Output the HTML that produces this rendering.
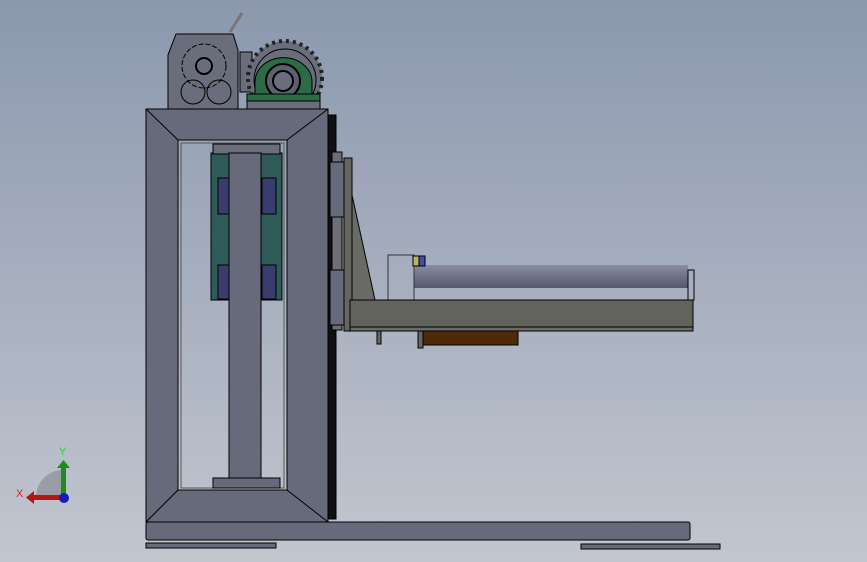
<!DOCTYPE html><html><head><style>html,body{margin:0;padding:0;overflow:hidden}body{width:867px;height:562px}</style></head><body>
<svg width="867" height="562" viewBox="0 0 867 562" xmlns="http://www.w3.org/2000/svg" font-family="Liberation Sans, sans-serif">
<defs>
<linearGradient id="bg" x1="0" y1="0" x2="0" y2="1"><stop offset="0" stop-color="#8b98ae"/><stop offset="1" stop-color="#c2c6cf"/></linearGradient>
<linearGradient id="rol" x1="0" y1="0" x2="0" y2="1"><stop offset="0" stop-color="#8a8ea3"/><stop offset="0.5" stop-color="#6f7285"/><stop offset="1" stop-color="#55586a"/></linearGradient>
</defs>
<rect width="867" height="562" fill="url(#bg)"/>
<g stroke="#000" stroke-width="1">
<line x1="230" y1="32" x2="242" y2="13" stroke="#777" stroke-width="3"/>
<path d="M176 34H233L238 50V109H168V55Z" fill="#6a6d7b"/>
<circle cx="204" cy="66" r="22" fill="#6a6d7b" stroke-dasharray="5 2"/><circle cx="204" cy="66" r="8" fill="#6a6d7b" stroke-width="2"/>
<circle cx="193" cy="92" r="12" fill="none"/><circle cx="219" cy="92" r="12" fill="none"/>
<rect x="240" y="52" width="12" height="40" fill="#6a6d7b"/>
<circle cx="285" cy="78" r="37" fill="#6a6d7b" stroke="#222" stroke-dasharray="3 4" stroke-width="4"/>
<circle cx="285" cy="80" r="31" fill="#6a6d7b"/>
<path d="M255 100V82A28 24 0 0 1 312 82V100Z" fill="#2d6b46"/>
<circle cx="283" cy="81" r="17" fill="#5d6070" stroke-width="2"/><circle cx="283" cy="81" r="10" fill="#6a6d7b" stroke-width="2"/>
<rect x="247" y="94" width="73" height="7" fill="#2d6b46"/>
<rect x="247" y="101" width="73" height="8" fill="#6a6d7b"/>
<rect x="318" y="113" width="10" height="410" fill="#70737f"/>
<rect x="328" y="115" width="8" height="404" fill="#111"/>
<path d="M146 109H328V522H146Z M178 140V490H287V140Z" fill="#676a7a" fill-rule="evenodd"/>
<path d="M146 109L178 140M328 109L287 140M146 522L178 490M328 522L287 490" />
<rect x="181" y="143" width="103" height="345" fill="none" stroke="#555"/>
<rect x="211" y="153" width="71" height="147" fill="#2e5a58"/>
<rect x="218" y="178" width="14" height="36" fill="#3b3c6e"/><rect x="262" y="178" width="14" height="36" fill="#3b3c6e"/>
<rect x="218" y="265" width="14" height="34" fill="#3b3c6e"/><rect x="262" y="265" width="14" height="34" fill="#3b3c6e"/>
<rect x="213" y="144" width="67" height="10" fill="#6a6d7b"/>
<rect x="229" y="153" width="32" height="325" fill="#676a7a"/>
<rect x="213" y="478" width="67" height="10" fill="#676a7a"/>
<rect x="146" y="522" width="544" height="18" fill="#676a7a" rx="2"/>
<rect x="146" y="543" width="130" height="5" fill="#676a7a"/>
<rect x="581" y="544" width="139" height="5" fill="#676a7a"/>
<rect x="332" y="152" width="10" height="178" fill="#6e6f76"/>
<rect x="330" y="162" width="14" height="55" fill="#666a7a"/>
<rect x="330" y="270" width="14" height="55" fill="#666a7a"/>
<rect x="344" y="158" width="8" height="173" fill="#666660"/>
<path d="M352 195L375 300H352Z" fill="#6a6a66"/>
<rect x="414" y="265" width="274" height="23" fill="url(#rol)" stroke="none"/>
<rect x="388" y="255" width="26" height="45" fill="none" stroke="#333"/>
<rect x="413" y="256" width="6" height="10" fill="#b8b46a"/><rect x="419" y="256" width="6" height="10" fill="#4a4aa8"/>
<rect x="688" y="270" width="6" height="30" fill="none"/>
<rect x="350" y="300" width="343" height="27" fill="#63635e"/>
<rect x="350" y="327" width="343" height="4" fill="#6a6a66"/>
<rect x="377" y="331" width="4" height="13" fill="#666"/>
<rect x="418" y="331" width="5" height="17" fill="#666"/>
<rect x="423" y="331" width="95" height="14" fill="#4f2a08"/>
</g>
<path d="M36 497A27 27 0 0 1 63 470V497Z" fill="#9a9da6"/>
<rect x="61" y="467" width="5" height="30" fill="#1f8a1f"/><path d="M57 468L63.5 460L70 468Z" fill="#1f8a1f"/>
<rect x="33" y="495" width="30" height="5" fill="#b01818"/><path d="M34 491L26 497.5L34 504Z" fill="#b01818"/>
<circle cx="64" cy="498" r="5" fill="#1a1ab8"/>
<text x="59" y="455" font-size="11" fill="#22dd22">Y</text>
<text x="16" y="497" font-size="11" fill="#e02020">X</text>
</svg>
</body></html>
